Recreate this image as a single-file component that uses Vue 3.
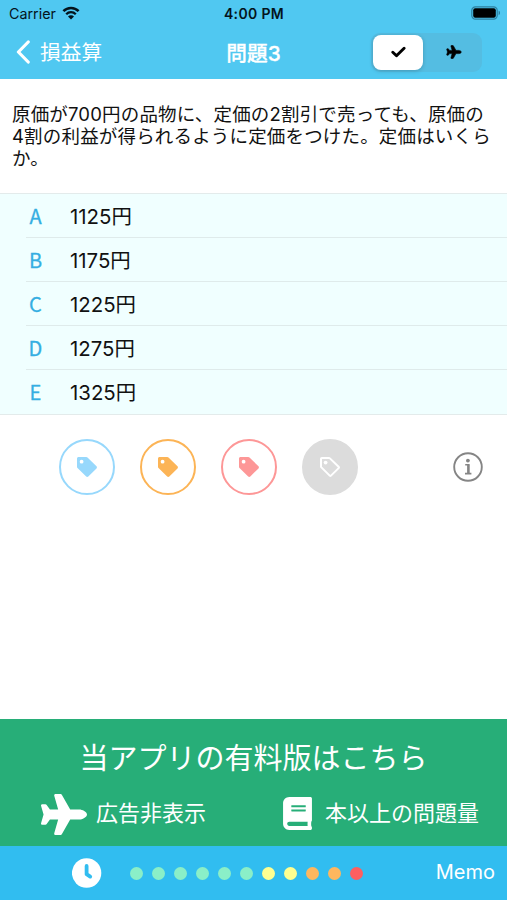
<script setup>
import { ref } from 'vue'

const questionLines = [
  '原価が700円の品物に、定価の2割引で売っても、原価の',
  '4割の利益が得られるように定価をつけた。定価はいくら',
  'か。'
]

const choices = [
  { label: 'A', text: '1125円' },
  { label: 'B', text: '1175円' },
  { label: 'C', text: '1225円' },
  { label: 'D', text: '1275円' },
  { label: 'E', text: '1325円' }
]

const tags = ['blue', 'orange', 'red', 'gray']

const dots = [
  'green', 'green', 'green', 'green', 'green', 'green',
  'yellow', 'yellow', 'orange', 'orange', 'red'
]

const mode = ref('check')

const planePath = 'M480 192H365.71L260.61 8.06A16.014 16.014 0 0 0 246.71 0h-65.5c-10.63 0-18.3 10.17-15.38 20.39L214.86 192H112l-43.2-57.6c-3.02-4.03-7.77-6.4-12.8-6.4H16.01C5.6 128-2.04 137.78.49 147.88L32 256 .49 364.12C-2.04 374.22 5.6 384 16.01 384H56c5.04 0 9.78-2.37 12.8-6.4L112 320h102.86l-49.03 171.6c-2.92 10.22 4.75 20.4 15.38 20.4h65.5c5.74 0 11.04-3.08 13.89-8.06L365.71 320H480c35.35 0 96-28.65 96-64s-60.65-64-96-64z'
</script>

<template>
  <div class="screen">
    <header class="top">
      <div class="status-bar">
        <div class="carrier">
          <span>Carrier</span>
          <svg class="wifi" viewBox="0 0 18 14">
            <path d="M1.4 5.2a10.8 10.8 0 0 1 15.2 0" fill="none" stroke="#04141c" stroke-width="2.6" />
            <path d="M4.2 8.2a6.8 6.8 0 0 1 9.6 0" fill="none" stroke="#04141c" stroke-width="2.3" />
            <path d="M9 13.6L6 10.5a4.2 4.2 0 0 1 6 0z" fill="#04141c" />
          </svg>
        </div>
        <span class="time">4:00 PM</span>
        <div class="battery-box">
          <svg class="battery" viewBox="0 0 30 14">
            <rect x=".8" y=".8" width="25.4" height="12.4" rx="3.6" fill="none" stroke="#2c7f9f" stroke-width="1.2" />
            <rect x="2.2" y="2.2" width="22.6" height="9.6" rx="2" fill="#000" />
            <path d="M27.6 4.8c1.9.6 1.9 3.8 0 4.4z" fill="#2c7f9f" />
          </svg>
        </div>
      </div>

      <nav class="nav-bar">
        <div class="back">
          <svg class="chevron" viewBox="0 0 14 24">
            <path d="M12.2 2L2.4 12l9.8 10" fill="none" stroke="#fff" stroke-width="3.2" stroke-linecap="round" stroke-linejoin="round" />
          </svg>
          <span>損益算</span>
        </div>
        <h1 class="title">問題3</h1>
        <div class="segment-box">
          <div class="segment">
            <button :class="{ active: mode === 'check' }" @click="mode = 'check'">
              <svg width="15" height="12" viewBox="0 0 15 12">
                <path d="M1.8 6.2l3.7 3.6 7.6-7.6" fill="none" stroke="#000" stroke-width="2.9" stroke-linecap="round" stroke-linejoin="round" />
              </svg>
            </button>
            <button :class="{ active: mode === 'plane' }" @click="mode = 'plane'">
              <svg width="16" height="14" viewBox="-20 -20 616 552">
                <path :d="planePath" fill="#000" stroke="#000" stroke-width="24" />
              </svg>
            </button>
          </div>
        </div>
      </nav>
    </header>

    <section class="question">
      <p v-for="(line, i) in questionLines" :key="i">{{ line }}</p>
    </section>

    <ul class="choices">
      <li v-for="choice in choices" :key="choice.label">
        <span class="label">{{ choice.label }}</span>
        <span class="text">{{ choice.text }}</span>
      </li>
    </ul>

    <section class="tags">
      <div v-for="tag in tags" :key="tag" class="tag" :class="tag">
        <svg v-if="tag !== 'gray'" width="20" height="20" viewBox="0 0 20 20">
          <path fill-rule="evenodd" fill="currentColor" d="M1.6 0H9.3c.5 0 .9.2 1.2.5l9 8.8c.6.6.6 1.5 0 2.1L11.3 19.5c-.6.6-1.5.6-2.1 0L.5 11C.2 10.7 0 10.3 0 9.9V1.6C0 .7.7 0 1.6 0zM4.6 2.8a1.9 1.9 0 1 0 0 3.8a1.9 1.9 0 1 0 0-3.8z" />
        </svg>
        <svg v-else width="20" height="20" viewBox="0 0 20 20">
          <path fill="none" stroke="currentColor" stroke-width="2" stroke-linejoin="round" d="M1.8 1H8.9c.4 0 .7.1 1 .4l8.7 8.4c.4.4.4.9 0 1.3L11 18.6c-.4.4-.9.4-1.3 0L1.4 10.4C1.1 10.1 1 9.8 1 9.4V1.8C1 1.3 1.3 1 1.8 1z" />
          <circle cx="5.6" cy="5.6" r="1.9" fill="currentColor" />
        </svg>
      </div>
      <svg class="info" width="30" height="30" viewBox="0 0 30 30" fill="none">
        <circle cx="15" cy="15" r="13.8" stroke="#858585" stroke-width="1.9" />
        <circle cx="14.9" cy="8.6" r="1.9" fill="#858585" />
        <path d="M15.4 12.2v9.4" stroke="#858585" stroke-width="2.6" />
        <path d="M12.2 12.8h4M12 21.6h6.4" stroke="#858585" stroke-width="1.6" />
      </svg>
    </section>

    <section class="promo">
      <h2>当アプリの有料版はこちら</h2>
      <div class="features">
        <div class="feature no-ads">
          <svg width="46" height="41" viewBox="0 0 576 512"><path :d="planePath" fill="#fff" /></svg>
          <span>広告非表示</span>
        </div>
        <div class="feature more">
          <svg width="29" height="33" viewBox="0 0 448 512">
            <path fill="#fff" d="M448 360V24c0-13.3-10.7-24-24-24H96C43 0 0 43 0 96v320c0 53 43 96 96 96h328c13.3 0 24-10.7 24-24v-16c0-7.5-3.5-14.3-8.9-18.7-4.2-15.4-4.2-59.3 0-74.7 5.4-4.3 8.9-11.1 8.9-18.6zM128 134c0-3.3 2.7-6 6-6h212c3.3 0 6 2.7 6 6v20c0 3.3-2.7 6-6 6H134c-3.3 0-6-2.7-6-6v-20zm0 64c0-3.3 2.7-6 6-6h212c3.3 0 6 2.7 6 6v20c0 3.3-2.7 6-6 6H134c-3.3 0-6-2.7-6-6v-20zm253.4 250H96c-17.7 0-32-14.3-32-32 0-17.6 14.4-32 32-32h285.4c-1.9 17.1-1.9 46.9 0 64z" />
          </svg>
          <span>本以上の問題量</span>
        </div>
      </div>
    </section>

    <footer class="toolbar">
      <svg class="clock" width="30" height="30" viewBox="0 0 30 30">
        <circle cx="14.6" cy="15" r="14.7" fill="#fff" />
        <path d="M14.6 8v8.2l3.6 2.4" fill="none" stroke="#31bdf0" stroke-width="3.8" stroke-linecap="round" stroke-linejoin="round" />
      </svg>
      <div class="dots">
        <i v-for="(color, i) in dots" :key="i" :class="color"></i>
      </div>
      <span class="memo">Memo</span>
    </footer>
  </div>
</template>

<style>
body {
  margin: 0;
  background: #fff;
}
</style>

<style scoped>
.screen {
  display: flex;
  flex-direction: column;
  width: 507px;
  height: 900px;
  overflow: hidden;
  background: #fff;
  color: #111;
  font-family: Inter, 'Noto Sans CJK JP', sans-serif;
}

svg {
  display: block;
  flex: none;
}

/* ステータスバーとナビゲーション */
.top {
  height: 79px;
  flex: none;
  background: #50c8f1;
}

.status-bar {
  display: grid;
  grid-template-columns: 1fr auto 1fr;
  align-items: center;
  height: 27px;
  padding: 0 6px 0 7px;
  font-size: 14px;
  color: #04141c;
}

.carrier {
  display: flex;
  align-items: center;
  gap: 6px;
  margin-left: 2px;
  font-size: 14.3px;
}

.wifi {
  width: 18px;
  height: 14px;
  margin-top: -2px;
}

.time {
  font-weight: 600;
  letter-spacing: 0.35px;
}

.battery-box {
  display: flex;
  justify-content: flex-end;
}

.battery {
  width: 30px;
  height: 14px;
  margin-top: -1px;
}

.nav-bar {
  display: grid;
  grid-template-columns: 1fr auto 1fr;
  align-items: center;
  height: 50px;
  padding: 0 25px;
  color: #fff;
}

.back {
  display: flex;
  align-items: center;
  gap: 10px;
  margin-left: -9px;
  font-size: 20.7px;
  line-height: 28px;
}

.back span {
  margin-top: 1px;
}

.chevron {
  width: 14px;
  height: 24px;
}

.title {
  margin: -1px 0 0;
  font-size: 20.7px;
  font-weight: 500;
  -webkit-text-stroke: 0.3px #fff;
}

.segment-box {
  display: flex;
  justify-content: flex-end;
}

.segment {
  display: flex;
  box-sizing: border-box;
  width: 111px;
  height: 39px;
  padding: 2px;
  border-radius: 9px;
  background: #54bde2;
}

.segment button {
  display: flex;
  align-items: center;
  justify-content: center;
  flex: 1;
  padding: 0 0 0 5px;
  border: 0;
  border-radius: 8px;
  background: transparent;
}

.segment button.active {
  flex: none;
  width: 50px;
  padding: 0;
  background: #fff;
  box-shadow: 0 1px 4px rgba(0, 0, 0, 0.2);
}

/* 問題文 */
.question {
  flex: none;
  box-sizing: border-box;
  height: 114px;
  padding: 24px 12px 0;
  font-size: 18.5px;
  letter-spacing: 0.17px;
  line-height: 22px;
}

.question p {
  margin: 0;
  white-space: nowrap;
}

/* 選択肢 */
.choices {
  flex: none;
  margin: 0;
  padding: 0 0 0 26px;
  list-style: none;
  background: #f0ffff;
  border-top: 1px solid #e3ebeb;
  border-bottom: 1px solid #e3ebeb;
}

.choices li {
  display: flex;
  align-items: center;
  box-sizing: border-box;
  height: 44px;
  border-bottom: 1px solid #dfebeb;
}

.choices li:last-child {
  border-bottom-color: transparent;
}

.label {
  width: 19px;
  margin-right: 25px;
  text-align: center;
  font-family: 'Noto Sans CJK JP', sans-serif;
  font-size: 20px;
  font-weight: 400;
  -webkit-text-stroke: 0.3px currentColor;
  color: #35aee2;
}

.text {
  margin-top: -1px;
  font-size: 20.4px;
}

/* タグ */
.tags {
  display: flex;
  align-items: flex-start;
  flex: 1;
  gap: 25px;
  padding: 24px 24px 0 59px;
}

.tag {
  display: flex;
  align-items: center;
  justify-content: center;
  box-sizing: border-box;
  width: 56px;
  height: 56px;
  border: 2px solid currentColor;
  border-radius: 50%;
}

.tag.blue { color: #97d8fc; }
.tag.orange { color: #fcb456; }
.tag.red { color: #fd9797; }

.tag.gray {
  color: #fff;
  border-color: #dcdcdc;
  background: #dcdcdc;
}

.info {
  margin: 13px 0 0 auto;
}

/* 有料版の案内 */
.promo {
  height: 127px;
  flex: none;
  background: #27ae78;
  color: #fff;
}

.promo h2 {
  margin: 0;
  padding-top: 15px;
  text-align: center;
  font-family: 'Noto Sans CJK JP', sans-serif;
  font-size: 29px;
  font-weight: 400;
  line-height: 44px;
}

.features {
  display: flex;
  justify-content: space-between;
  padding: 15px 28px 0 41px;
  font-size: 22px;
}

.feature {
  display: flex;
  align-items: center;
  height: 42px;
}

.feature span {
  margin-top: -7px;
}

.more svg {
  margin-top: -1px;
}

.no-ads { gap: 9px; }
.more { gap: 13px; }

/* 下部ツールバー */
.toolbar {
  display: flex;
  align-items: center;
  height: 54px;
  padding: 0 12px 0 72px;
  flex: none;
  background: #31bdf0;
}

.dots {
  display: flex;
  gap: 9px;
  margin-left: 28px;
}

.dots i {
  width: 13px;
  height: 13px;
  border-radius: 50%;
}

.dots .green { background: #8aefc8; }
.dots .yellow { background: #feff91; }
.dots .orange { background: #fdb75f; }
.dots .red { background: #fd5f60; }

.memo {
  margin: -3px 0 0 auto;
  font-size: 20px;
  color: #fff;
}
</style>
